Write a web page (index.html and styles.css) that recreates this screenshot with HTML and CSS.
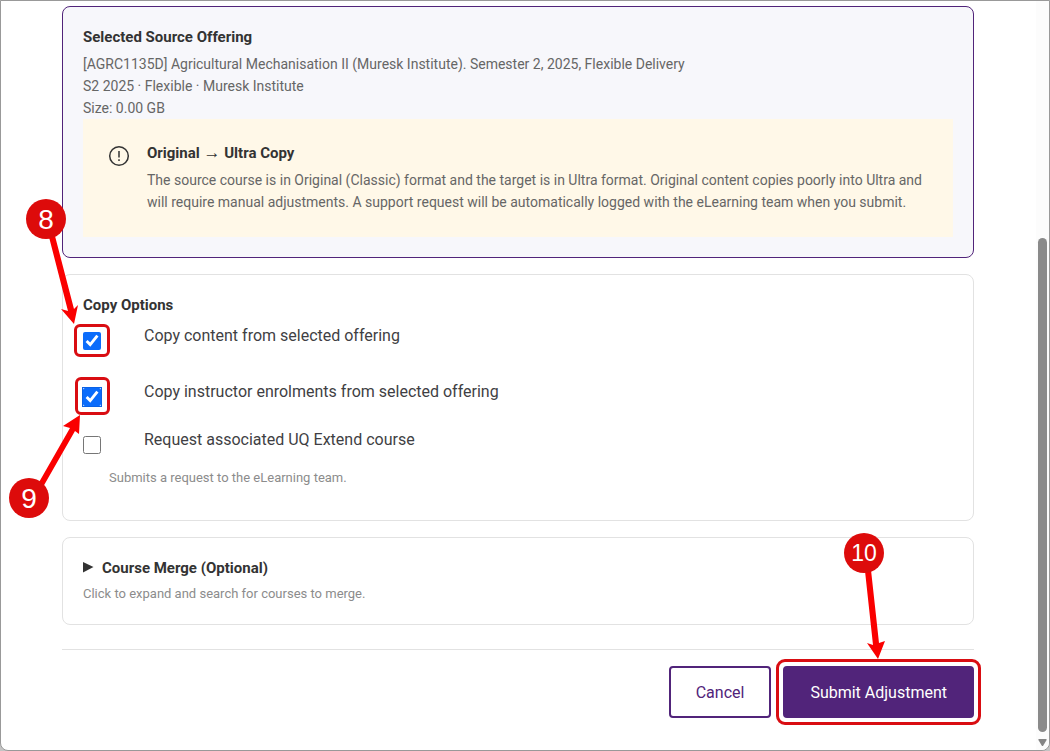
FILE: index.html
```html
<!DOCTYPE html>
<html lang="en">
<head>
	<meta charset="utf-8">
	<title>Course Adjustment</title>
	<link rel="stylesheet" href="styles.css">
</head>
<body>
	<div class="window">
		<main class="content">
			<section class="card selected">
				<h2>Selected Source Offering</h2>
				<p>[AGRC1135D] Agricultural Mechanisation II (Muresk Institute). Semester 2, 2025, Flexible Delivery</p>
				<p>S2 2025 · Flexible · Muresk Institute</p>
				<p>Size: 0.00 GB</p>
				<div class="notice">
					<svg class="notice-icon" width="22" height="22" viewBox="0 0 22 22" fill="none" stroke="#333" stroke-width="1.5">
						<circle cx="11" cy="11" r="9.3"/>
						<path d="M11 6v6.4M11 14.2v1.8"/>
					</svg>
					<div>
						<h3>Original <span class="arrow">→</span> Ultra Copy</h3>
						<p>The source course is in Original (Classic) format and the target is in Ultra format. Original content copies poorly into Ultra and will require manual adjustments. A support request will be automatically logged with the eLearning team when you submit.</p>
					</div>
				</div>
			</section>

			<section class="card options">
				<h2>Copy Options</h2>
				<div class="option first">
					<span class="tick ring">
						<input type="checkbox" id="copyContent" checked>
						<span class="callout step8">
							<svg width="56" height="126" viewBox="0 0 56 126" fill="#fa0000">
								<path d="M23 38L29 37L48 110L52 106L48 125L35 110L42 112Z"/>
							</svg>
							<b class="badge">8</b>
						</span>
					</span>
					<label for="copyContent">Copy content from selected offering</label>
				</div>
				<div class="option">
					<span class="tick ring focused">
						<input type="checkbox" id="copyInstructors" checked>
						<span class="callout step9">
							<svg width="72" height="104" viewBox="0 0 72 104" fill="#fa0000">
								<path d="M29 70L61 14L54 12L71 1L70 20L66 17L34 73Z"/>
							</svg>
							<b class="badge">9</b>
						</span>
					</span>
					<label for="copyInstructors">Copy instructor enrolments from selected offering</label>
				</div>
				<div class="option">
					<span class="tick">
						<input type="checkbox" id="requestExtend">
					</span>
					<label for="requestExtend">Request associated UQ Extend course</label>
				</div>
				<p class="hint">Submits a request to the eLearning team.</p>
			</section>

			<section class="card">
				<details>
					<summary>
						<svg width="11" height="12" viewBox="0 0 11 12" fill="#333"><path d="M0 0L10.500 5L0 10.500Z"/></svg>
						Course Merge (Optional)
					</summary>
				</details>
				<p class="hint">Click to expand and search for courses to merge.</p>
			</section>

			<div class="actions">
				<button type="button" class="btn">Cancel</button>
				<div class="submit ring">
					<button type="submit" class="btn primary">Submit Adjustment</button>
					<span class="callout step10">
						<svg width="42" height="128" viewBox="0 0 42 128" fill="#fa0000">
							<path d="M21 38L27 37L35 110L41 108L34 126L23 110L29 112Z"/>
						</svg>
						<b class="badge small">10</b>
					</span>
				</div>
			</div>
		</main>

		<div class="scrollbar">
			<div class="space"></div>
			<div class="thumb"></div>
			<svg width="9" height="9" viewBox="0 0 9 9" fill="#858585"><path d="M1 1H8Q9 1 8.600 2L5.300 7.400Q4.500 8.500 3.700 7.400L.4 2Q0 1 1 1Z"/></svg>
		</div>
	</div>
</body>
</html>
```
FILE: styles.css
```css
* {
	box-sizing: border-box;
}
body {
	margin: 0;
	background: #c4c4c4;
	font-family: Roboto, "Liberation Sans", sans-serif;
	font-size: 14px;
	line-height: 22px;
	color: #666;
}
h2, h3, p {
	margin: 0;
}
h2, h3, summary {
	font-size: 15px;
	line-height: 20px;
	font-weight: bold;
	color: #333;
	margin-bottom: 6px;
}
.window {
	display: flex;
	min-height: 100vh;
	border: 1px solid #999;
	border-radius: 0 0 8px 8px;
	background: #fff;
}
.content {
	flex: 1;
	padding: 5px 62px 31px 61px;
}

/* cards */
.card {
	margin-bottom: 16px;
	padding: 20px;
	border: 1px solid #e2e2e2;
	border-radius: 8px;
}
.selected {
	border-color: #51247a;
	background: #f7f7fb;
}
.notice {
	display: flex;
	gap: 17px;
	padding: 24px 25px;
	background: #fff8e8;
}
.notice-icon {
	flex: none;
	margin-top: 2px;
}
.arrow {
	font-family: "Liberation Sans", sans-serif;
	font-size: 17px;
	line-height: 1;
	font-weight: normal;
}
.hint {
	font-size: 13px;
	line-height: 20px;
	color: #8c8c8c;
}

/* options */
.options h2 {
	margin-bottom: 9px;
}
.option {
	display: flex;
	gap: 43px;
	height: 24px;
	margin-bottom: 24px;
	font-size: 16px;
	line-height: 24px;
	color: #3f3f44;
}
.first {
	margin-bottom: 32px;
}
.options .hint {
	margin: -8px 0 12px 26px;
}
.tick {
	position: relative;
	flex: none;
	width: 18px;
	height: 18px;
	margin-top: 8px;
}
.tick input {
	display: block;
	width: 18px;
	height: 18px;
	margin: 0;
	accent-color: #0b6cfb;
}
.focused input {
	outline: 1px solid #0b62e6;
}
summary {
	display: flex;
	align-items: center;
	gap: 8px;
	list-style: none;
	cursor: pointer;
}

/* buttons */
.actions {
	display: flex;
	justify-content: flex-end;
	gap: 12px;
	margin-top: 24px;
	padding-top: 16px;
	border-top: 1px solid #e2e2e2;
}
.btn {
	height: 52px;
	padding: 0 25px;
	border: 2px solid #51247a;
	border-radius: 4px;
	background: #fff;
	color: #51247a;
	font-family: inherit;
	font-size: 16px;
	cursor: pointer;
}
.primary {
	background: #51247a;
	color: #fff;
}

/* numbered steps drawn over the page */
.ring {
	position: relative;
}
.ring::after {
	content: "";
	position: absolute;
	inset: -8px -9px -7px;
	border: 3px solid #d90d12;
	border-radius: 6px;
	pointer-events: none;
}
.focused::after {
	inset: -11px -9px -9px -8px;
}
.submit::after {
	inset: -7px;
	border-radius: 9px;
}
.callout {
	position: absolute;
	z-index: 1;
	pointer-events: none;
}
.callout svg {
	display: block;
}
.step8 {
	left: -57px;
	top: -133px;
}
.step9 {
	left: -74px;
	top: 26px;
}
.step10 {
	right: 88px;
	top: -133px;
}
.badge {
	position: absolute;
	left: 0;
	top: 0;
	width: 40px;
	height: 40px;
	border-radius: 50%;
	background: #dd0b0b;
	color: #fff;
	font: 28px/42px "Liberation Sans", sans-serif;
	text-align: center;
}
.step9 .badge {
	top: auto;
	bottom: 0;
}
.badge.small {
	font-size: 23px;
	line-height: 40px;
}

/* scrollbar */
.scrollbar {
	display: flex;
	flex-direction: column;
	align-items: center;
	width: 13px;
	padding-bottom: 3px;
	border-radius: 0 0 8px 0;
	background: #fcfcfc;
}
.space {
	flex: 237;
}
.thumb {
	flex: 494;
	width: 9px;
	margin-bottom: 6px;
	border-radius: 5px;
	background: #8a8a8a;
}
```
